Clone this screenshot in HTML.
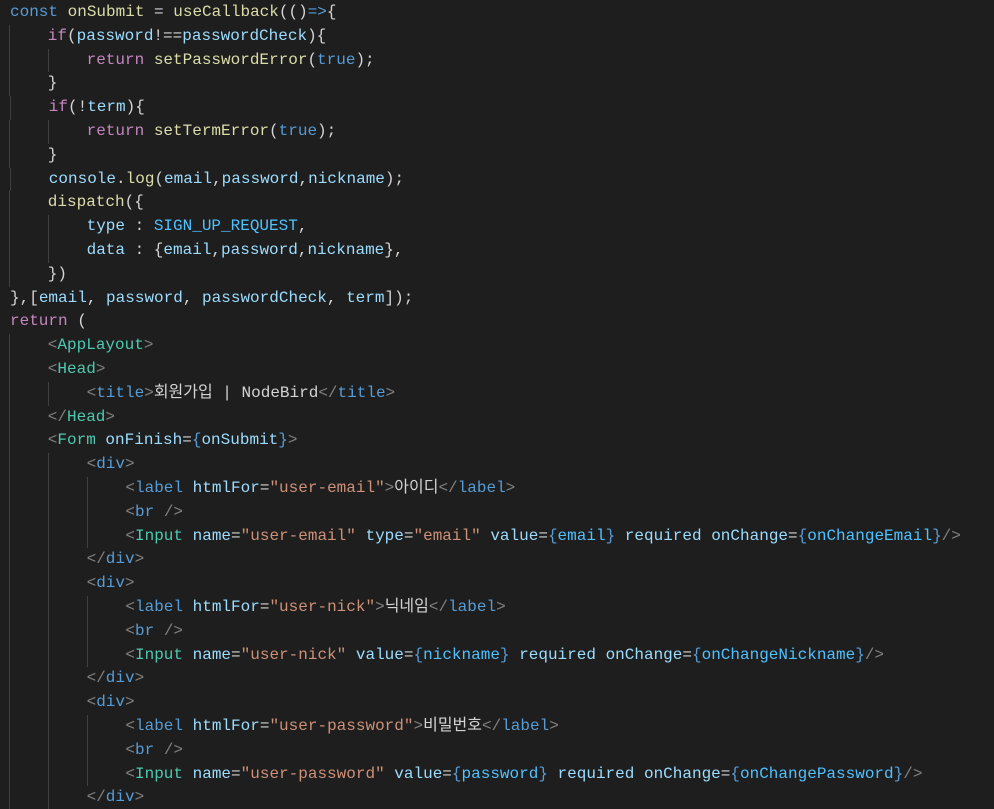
<!DOCTYPE html>
<html><head><meta charset="utf-8"><style>
html,body{margin:0;padding:0;background:#1e1e1e;width:994px;height:809px;overflow:hidden}
pre{margin:0;padding:1px 0 0 10px;font-family:"Liberation Mono","Noto Sans CJK KR",monospace;font-size:16px;line-height:23.8px;color:#d4d4d4;white-space:pre}
i{display:inline-block;width:38.8px;height:23.8px;vertical-align:top;border-left:1px solid #404040;box-sizing:border-box;margin-left:-1px;padding-left:1px}
i+i{margin-left:0}
.k{color:#569cd6}.c{color:#c586c0}.v{color:#9cdcfe}.f{color:#dcdcaa}.p{color:#808080}.t{color:#4ec9b0}.s{color:#ce9178}.n{color:#4fc1ff}
</style></head><body><pre><span class="k">const</span> <span class="f">onSubmit</span> = <span class="f">useCallback</span>(()<span class="k">=&gt;</span>{
<i></i><span class="c">if</span>(<span class="v">password</span>!==<span class="v">passwordCheck</span>){
<i></i><i></i><span class="c">return</span> <span class="f">setPasswordError</span>(<span class="k">true</span>);
<i></i>}
<i></i><span class="c">if</span>(!<span class="v">term</span>){
<i></i><i></i><span class="c">return</span> <span class="f">setTermError</span>(<span class="k">true</span>);
<i></i>}
<i></i><span class="v">console</span>.<span class="f">log</span>(<span class="v">email</span>,<span class="v">password</span>,<span class="v">nickname</span>);
<i></i><span class="f">dispatch</span>({
<i></i><i></i><span class="v">type</span> : <span class="n">SIGN_UP_REQUEST</span>,
<i></i><i></i><span class="v">data</span> : {<span class="v">email</span>,<span class="v">password</span>,<span class="v">nickname</span>},
<i></i>})
},[<span class="v">email</span>, <span class="v">password</span>, <span class="v">passwordCheck</span>, <span class="v">term</span>]);
<span class="c">return</span> (
<i></i><span class="p">&lt;</span><span class="t">AppLayout</span><span class="p">&gt;</span>
<i></i><span class="p">&lt;</span><span class="t">Head</span><span class="p">&gt;</span>
<i></i><i></i><span class="p">&lt;</span><span class="k">title</span><span class="p">&gt;</span>회원가입 | NodeBird<span class="p">&lt;/</span><span class="k">title</span><span class="p">&gt;</span>
<i></i><span class="p">&lt;/</span><span class="t">Head</span><span class="p">&gt;</span>
<i></i><span class="p">&lt;</span><span class="t">Form</span> <span class="v">onFinish</span>=<span class="k">{</span><span class="v">onSubmit</span><span class="k">}</span><span class="p">&gt;</span>
<i></i><i></i><span class="p">&lt;</span><span class="k">div</span><span class="p">&gt;</span>
<i></i><i></i><i></i><span class="p">&lt;</span><span class="k">label</span> <span class="v">htmlFor</span>=<span class="s">"user-email"</span><span class="p">&gt;</span>아이디<span class="p">&lt;/</span><span class="k">label</span><span class="p">&gt;</span>
<i></i><i></i><i></i><span class="p">&lt;</span><span class="k">br</span> <span class="p">/&gt;</span>
<i></i><i></i><i></i><span class="p">&lt;</span><span class="t">Input</span> <span class="v">name</span>=<span class="s">"user-email"</span> <span class="v">type</span>=<span class="s">"email"</span> <span class="v">value</span>=<span class="k">{</span><span class="n">email</span><span class="k">}</span> <span class="v">required</span> <span class="v">onChange</span>=<span class="k">{</span><span class="n">onChangeEmail</span><span class="k">}</span><span class="p">/&gt;</span>
<i></i><i></i><span class="p">&lt;/</span><span class="k">div</span><span class="p">&gt;</span>
<i></i><i></i><span class="p">&lt;</span><span class="k">div</span><span class="p">&gt;</span>
<i></i><i></i><i></i><span class="p">&lt;</span><span class="k">label</span> <span class="v">htmlFor</span>=<span class="s">"user-nick"</span><span class="p">&gt;</span>닉네임<span class="p">&lt;/</span><span class="k">label</span><span class="p">&gt;</span>
<i></i><i></i><i></i><span class="p">&lt;</span><span class="k">br</span> <span class="p">/&gt;</span>
<i></i><i></i><i></i><span class="p">&lt;</span><span class="t">Input</span> <span class="v">name</span>=<span class="s">"user-nick"</span> <span class="v">value</span>=<span class="k">{</span><span class="n">nickname</span><span class="k">}</span> <span class="v">required</span> <span class="v">onChange</span>=<span class="k">{</span><span class="n">onChangeNickname</span><span class="k">}</span><span class="p">/&gt;</span>
<i></i><i></i><span class="p">&lt;/</span><span class="k">div</span><span class="p">&gt;</span>
<i></i><i></i><span class="p">&lt;</span><span class="k">div</span><span class="p">&gt;</span>
<i></i><i></i><i></i><span class="p">&lt;</span><span class="k">label</span> <span class="v">htmlFor</span>=<span class="s">"user-password"</span><span class="p">&gt;</span>비밀번호<span class="p">&lt;/</span><span class="k">label</span><span class="p">&gt;</span>
<i></i><i></i><i></i><span class="p">&lt;</span><span class="k">br</span> <span class="p">/&gt;</span>
<i></i><i></i><i></i><span class="p">&lt;</span><span class="t">Input</span> <span class="v">name</span>=<span class="s">"user-password"</span> <span class="v">value</span>=<span class="k">{</span><span class="n">password</span><span class="k">}</span> <span class="v">required</span> <span class="v">onChange</span>=<span class="k">{</span><span class="n">onChangePassword</span><span class="k">}</span><span class="p">/&gt;</span>
<i></i><i></i><span class="p">&lt;/</span><span class="k">div</span><span class="p">&gt;</span>
</pre></body></html>
